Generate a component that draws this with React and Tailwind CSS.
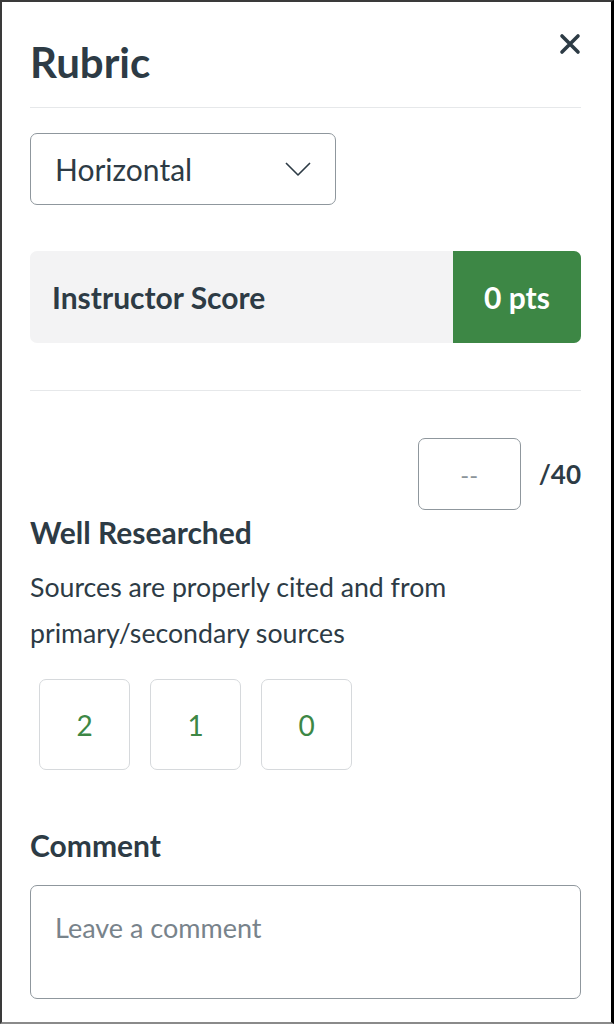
import React, { useState } from 'react';

const ratings = [2, 1, 0];

const CloseIcon = () => (
  <svg width="22" height="22" viewBox="0 0 22 22" fill="none">
    <path d="M3 3L19 19M19 3L3 19" stroke="#2d3b45" strokeWidth="3.6" strokeLinecap="round" />
  </svg>
);

const ChevronDown = () => (
  <svg width="28" height="16" viewBox="0 0 28 16" fill="none">
    <path d="M2 2L14 14L26 2" stroke="#2d3b45" strokeWidth="1.6" strokeLinejoin="round" />
  </svg>
);

const App = () => {
  const [comment, setComment] = useState('');
  const [score, setScore] = useState('');

  return (
    <div
      className="w-[614px] h-[1024px] bg-white border-l-2 border-t-2 border-[#3a3a3a] border-r-[3px] border-r-black border-b-[2px] border-b-[#8a8a8a] overflow-hidden text-[#2d3b45]"
      style={{ fontFamily: 'Lato, "Noto Sans", sans-serif' }}
    >
      <div className="pl-[28px] pr-[30px]">
        {/* Header */}
        <div className="flex justify-between items-start pt-[31px] pb-[20px] border-b border-[#e6e8ea]">
          <h1 className="mt-[4px] text-[42px] leading-[50px] font-bold">Rubric</h1>
          <button className="w-[22px] h-[22px]">
            <CloseIcon />
          </button>
        </div>

        {/* View select */}
        <div className="mt-[25px] w-[306px] h-[72px] border-[1.5px] border-[#8f979d] rounded-[7px] flex items-center justify-between pl-[24px] pr-[23px]">
          <span className="text-[30px] leading-none">Horizontal</span>
          <ChevronDown />
        </div>

        {/* Instructor score */}
        <div className="mt-[46px] h-[92px] flex rounded-[7px] overflow-hidden bg-[#f3f3f4]">
          <div className="flex-1 flex items-center pl-[22px] text-[30px] font-bold">Instructor Score</div>
          <div className="w-[128px] bg-[#3d8745] text-white flex items-center justify-center text-[30px] font-bold">
            0 pts
          </div>
        </div>

        <div className="mt-[47px] border-t border-[#e6e8ea]" />

        {/* Criterion */}
        <div className="mt-[47px] flex justify-end items-center gap-[18px]">
          <input
            value={score}
            onChange={(e) => setScore(e.target.value)}
            placeholder="--"
            className="w-[103px] h-[72px] border-[1.5px] border-[#8f979d] rounded-[7px] text-center text-[24px] placeholder-[#8b949a] outline-none"
          />
          <span className="text-[26px] font-bold">/40</span>
        </div>

        <h2 className="mt-[2px] text-[30px] leading-[40px] font-bold">Well Researched</h2>
        <p className="mt-[12px] text-[26.7px] leading-[46px]">
          Sources are properly cited and from
          <br />
          primary/secondary sources
        </p>

        <div className="mt-[23px] ml-[9px] flex gap-[20px]">
          {ratings.map((r) => (
            <button
              key={r}
              className="w-[91px] h-[91px] border-[1.5px] border-[#d6d9dc] rounded-[7px] flex items-center justify-center text-[28px] text-[#3d8745]"
            >
              {r}
            </button>
          ))}
        </div>

        <h2 className="mt-[55px] text-[30px] leading-[40px] font-bold">Comment</h2>
        <textarea
          value={comment}
          onChange={(e) => setComment(e.target.value)}
          placeholder="Leave a comment"
          className="mt-[20px] block w-full h-[114px] border-[1.5px] border-[#8f979d] rounded-[7px] px-[24px] py-[22px] text-[27px] leading-[40px] placeholder-[#78838b] resize-none outline-none"
        />
      </div>
    </div>
  );
};

export default App;
